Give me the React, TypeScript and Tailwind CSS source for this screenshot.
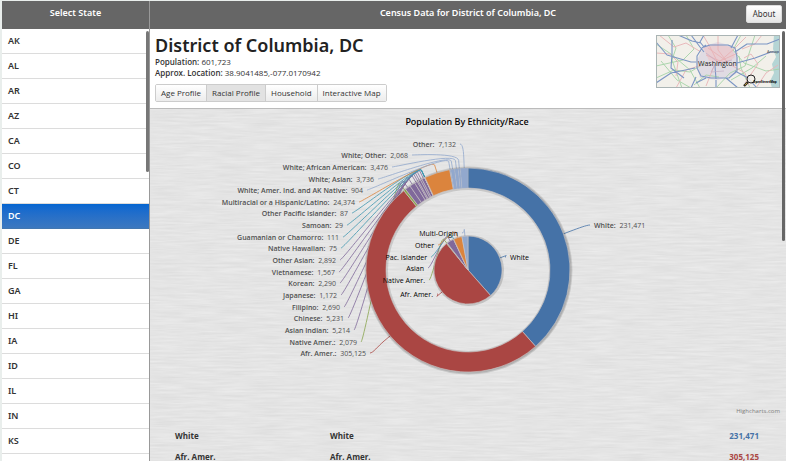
import React from "react";

const STATES = ["AK", "AL", "AR", "AZ", "CA", "CO", "CT", "DC", "DE", "FL", "GA", "HI", "IA", "ID", "IL", "IN", "KS"];
const TABS = ["Age Profile", "Racial Profile", "Household", "Interactive Map"];

const BLUE = "#4572a7";
const RED = "#aa4643";
const GREEN = "#89a54e";
const PURPLE = "#80699b";
const TEAL = "#3d96ae";
const ORANGE = "#db843d";
const SKY = "#92a8cd";

const CX = 468;
const CY = 270;
const OUTER = 102;
const HOLE = 82;
const PIE = 34;

type Slice = { name: string; value: number; color: string; x: number; y: number; anchor?: "start" | "end" };

const RING: Slice[] = [
  { name: "White", value: 231471, color: BLUE, x: 594, y: 225, anchor: "start" },
  { name: "Afr. Amer.", value: 305125, color: RED, x: 366, y: 353 },
  { name: "Native Amer.", value: 2079, color: GREEN, x: 357, y: 342 },
  { name: "Asian Indian", value: 5214, color: PURPLE, x: 350, y: 330 },
  { name: "Chinese", value: 5231, color: PURPLE, x: 344, y: 318 },
  { name: "Filipino", value: 2690, color: PURPLE, x: 340, y: 307 },
  { name: "Japanese", value: 1172, color: PURPLE, x: 337, y: 295 },
  { name: "Korean", value: 2290, color: PURPLE, x: 336, y: 283 },
  { name: "Vietnamese", value: 1567, color: PURPLE, x: 335, y: 272 },
  { name: "Other Asian", value: 2892, color: PURPLE, x: 336, y: 260 },
  { name: "Native Hawaiian", value: 75, color: TEAL, x: 337, y: 248 },
  { name: "Guamanian or Chamorro", value: 111, color: TEAL, x: 339, y: 237 },
  { name: "Samoan", value: 29, color: TEAL, x: 343, y: 225 },
  { name: "Other Pacific Islander", value: 87, color: TEAL, x: 348, y: 213 },
  { name: "Multiracial or a Hispanic/Latino", value: 24374, color: ORANGE, x: 355, y: 202 },
  { name: "White; Amer. Ind. and AK Native", value: 904, color: SKY, x: 363, y: 190 },
  { name: "White; Asian", value: 3736, color: SKY, x: 374, y: 179 },
  { name: "White; African American", value: 3476, color: SKY, x: 388, y: 167 },
  { name: "White; Other", value: 2068, color: SKY, x: 408, y: 155 },
  { name: "Other", value: 7132, color: SKY, x: 456, y: 144 },
];

const CENTER: Slice[] = [
  { name: "White", value: 231471, color: BLUE, x: 510, y: 257, anchor: "start" },
  { name: "Afr. Amer.", value: 305125, color: RED, x: 433, y: 294 },
  { name: "Native Amer.", value: 2079, color: GREEN, x: 425, y: 280 },
  { name: "Asian", value: 21056, color: PURPLE, x: 424, y: 268 },
  { name: "Pac. Islander", value: 302, color: TEAL, x: 427, y: 257 },
  { name: "Other", value: 24374, color: ORANGE, x: 434, y: 245 },
  { name: "Multi-Origin", value: 17316, color: SKY, x: 458, y: 233 },
];

function point(radius: number, angle: number): [number, number] {
  return [CX + radius * Math.sin(angle), CY - radius * Math.cos(angle)];
}

function withAngles(slices: Slice[]) {
  const total = slices.reduce((sum, s) => sum + s.value, 0);
  let at = 0;
  return slices.map((s) => {
    const start = at;
    at += (s.value / total) * Math.PI * 2;
    return { ...s, start, end: at, mid: (start + at) / 2 };
  });
}

function arc(inner: number, outer: number, start: number, end: number) {
  const large = end - start > Math.PI ? 1 : 0;
  const a = point(outer, start);
  const b = point(outer, end);
  const c = point(inner, end);
  const d = point(inner, start);
  return `M${a} A${outer} ${outer} 0 ${large} 1 ${b} L${c} A${inner} ${inner} 0 ${large} 0 ${d} Z`;
}

function connector(s: Slice, radius: number, reach: number, mid: number) {
  const edge = point(radius, mid);
  const bend = point(radius + reach, mid);
  const side = s.anchor === "start" ? -1 : 1;
  const from = [s.x + side * 4, s.y];
  const pull = [2 * bend[0] - edge[0], 2 * bend[1] - edge[1]];
  return `M${from} C${[from[0] + side * 3, from[1]]} ${pull} ${bend} L${edge}`;
}

function Chart() {
  const ring = withAngles(RING);
  const center = withAngles(CENTER);
  return (
    <svg viewBox="150 109 636 310" className="relative block h-[310px] w-full font-['Open_Sans',sans-serif]" role="img" aria-label="Population By Ethnicity/Race">
      <text x="467" y="125" textAnchor="middle" className="fill-black font-['Noto_Sans',sans-serif] text-[9px] font-medium">Population By Ethnicity/Race</text>
      {ring.map((s) => (
        <path key={s.name} d={connector(s, OUTER, 8, s.mid)} fill="none" stroke={s.color} strokeWidth="0.8" />
      ))}
      <g fill="none" stroke="#000" strokeOpacity="0.12">
        <circle cx={CX + 0.5} cy={CY + 0.5} r={OUTER} strokeWidth="4" />
        <circle cx={CX + 0.5} cy={CY + 0.5} r={OUTER} strokeWidth="2" />
        <circle cx={CX + 0.5} cy={CY + 0.5} r={HOLE} strokeWidth="3" />
      </g>
      {ring.map((s) => (
        <path key={s.name} d={arc(HOLE, OUTER, s.start, s.end)} fill={s.color} stroke="#c9c4c4" strokeWidth={s.color === SKY ? 0.2 : 0.6} />
      ))}
      {center.map((s) => (
        <path key={s.name} d={connector(s, PIE, 5, s.mid)} fill="none" stroke={s.color} strokeWidth="0.8" />
      ))}
      <circle cx={CX + 0.5} cy={CY + 0.5} r={PIE} fill="none" stroke="#000" strokeOpacity="0.15" strokeWidth="3" />
      {center.map((s) => (
        <path key={s.name} d={arc(0, PIE, s.start, s.end)} fill={s.color} stroke="#c9c4c4" strokeWidth="0.6" />
      ))}
      {ring.map((s) => (
        <text key={s.name} x={s.x} y={s.y + 3} textAnchor={s.anchor ?? "end"} xmlSpace="preserve" className="fill-[#505050] text-[7px]">
          <tspan className="font-semibold">{s.name}:</tspan>
          {"  " + s.value.toLocaleString("en-US")}
        </text>
      ))}
      {center.map((s) => (
        <text key={s.name} x={s.x} y={s.y + 3} textAnchor={s.anchor ?? "end"} className="fill-black text-[7px]">{s.name}</text>
      ))}
      <text x="780" y="413" textAnchor="end" className="fill-[#808080] text-[6px]">Highcharts.com</text>
    </svg>
  );
}

function BrushedMetal() {
  return (
    <svg className="absolute inset-0 h-full w-full" aria-hidden="true">
      <filter id="brushed" x="0" y="0" width="100%" height="100%" colorInterpolationFilters="sRGB">
        <feTurbulence type="fractalNoise" baseFrequency="0.03 0.5" numOctaves="3" seed="4" />
        <feColorMatrix values="0.07 0 0 0 0.86  0.07 0 0 0 0.86  0.07 0 0 0 0.86  0 0 0 0 1" />
      </filter>
      <rect width="100%" height="100%" filter="url(#brushed)" />
    </svg>
  );
}

function LocationMap() {
  return (
    <svg viewBox="0 0 124 53" className="h-[53px] w-[124px] shrink-0 font-['Open_Sans',sans-serif]" role="img" aria-label="Map of Washington">
      <rect width="124" height="53" fill="#f2f0ea" />
      <path d="M118 0h6v53h-8l-2-7 4-8-2-9 4-7-3-8z" fill="#b5d5d5" />
      <path d="M40 27l8-16 14-4 14 4 6 12-2 16-18 6-18-2z" fill="#e0dbe3" />
      <path d="M47 12l12-3 17 3 3 10-8 6-18-2z" fill="#e8ccd1" />
      <g fill="none" stroke="#a4d3a6" strokeWidth="0.9">
        <path d="M0 9l15 10 19 16 10 18M12 0l8 13-4 12 10 28M0 43l18-8 16 2 15-9M30 0l8 14-11 11-27 6M85 0l-8 15 11 13 22 8 14-2M60 53l14-15 15-7 10-31M75 45l21-12 14-12M38 50l12-10 13 2M5 26l16 19 14 8M94 53l-9-20-2-12" />
      </g>
      <g fill="none" stroke="#e8b2b6" strokeWidth="0.9">
        <path d="M3 0l15 12 12-4 15 9M20 53l10-18 16-5M47 0l7 12 8 16 16-14 12-12M62 0v15l10 13M50 20l14 6 18-8M52 13l20 14M89 48l13-19-7-10-7 4M100 53l10-15 12-8M0 18l14 1 8 8-2 14M86 14l13-5 7-9M58 31l-8 20M75 30l14 8 4 12" />
      </g>
      <g fill="none" stroke="#7b95c4" strokeWidth="1.1" strokeLinejoin="round">
        <path d="M0 7l11 13 24 7 5 0M16 5v14l-1 14 13 10M0 48l15-10 24-5M35 0l9 12 4 5M48 0l-4 7 4 5 6-2h18l7 3 2 9v14l-8 7-18 0-10-2-4-8 0-12 5-8 4-3M75 13l7-13M79 17l12-8 20 0 13-5M81 28l18-5 16-6 9 0M60 45v8M60 44l-1-13M79 36l13 7 9 10M40 42l-5 11M50 43l-10 5M70 43l12 10M22 0l14 6 9 2" />
      </g>
      <path d="M50 18l13 10 13-3M60 28l-5 9 13-1" fill="none" stroke="#c3adc4" strokeWidth="0.7" />
      <text x="42" y="31" className="fill-[#222] text-[7px]">Washington</text>
      <text x="123" y="18" textAnchor="end" className="fill-[#444] text-[4px]">Annap</text>
      <path d="M92 47l-4 4" stroke="#332d20" strokeWidth="2.4" />
      <path d="M91 48l-2 2" stroke="#bb9638" strokeWidth="0.9" />
      <circle cx="95" cy="44" r="4" fill="#f2f0ea" fillOpacity="0.8" stroke="#222" strokeWidth="1" />
      <text x="97" y="48" className="fill-black text-[3px] font-bold">OpenStreetMap</text>
      <rect x="0.5" y="0.5" width="123" height="52" fill="none" stroke="#aab4b4" />
    </svg>
  );
}

export default function App() {
  return (
    <div className="flex h-screen overflow-hidden border-l-2 border-t border-[#e9eeec] bg-white font-['Noto_Sans',sans-serif] text-[9px] text-[#333]">
      <aside className="relative flex w-[148px] shrink-0 flex-col border-r border-[#999]">
        <h2 className="flex h-7 shrink-0 items-center justify-center bg-[#666] pb-1 font-semibold text-white">Select State</h2>
        <nav aria-label="States">
          {STATES.map((code) => (
            <button
              key={code}
              className={
                code === "DC"
                  ? "block h-[25px] w-full border-b border-[#4377b0] bg-linear-to-b from-[#0366d1] to-[#3c78bf] px-1.5 text-left font-semibold text-white"
                  : "block h-[25px] w-full border-b border-[#dcdcdc] bg-white px-1.5 text-left font-semibold text-[#333]"
              }
            >
              {code}
            </button>
          ))}
        </nav>
        <div className="absolute right-0 top-[30px] h-[141px] w-[3px] rounded-full bg-[#777]" />
      </aside>
      <main className="relative flex min-w-0 flex-1 flex-col">
        <header className="flex h-7 shrink-0 items-center bg-[#666] px-1">
          <div className="w-9" />
          <h2 className="flex-1 pb-1 text-center font-semibold text-white">Census Data for District of Columbia, DC</h2>
          <button className="mb-0.5 h-[18px] w-9 rounded-xs border border-[#ddd] bg-linear-to-b from-white to-[#e6e6e6] text-[8px] leading-3">About</button>
        </header>
        <section className="flex h-20 shrink-0 items-start justify-between border-b border-[#bbb] pl-[5px] pr-[6px] pt-1.5">
          <div>
            <h1 className="mb-px text-[18px] font-semibold leading-5 text-[#222]">District of Columbia, DC</h1>
            <p className="font-['Open_Sans',sans-serif] text-[8px] leading-[11px]"><b className="font-semibold">Population:</b> 601,723</p>
            <p className="font-['Open_Sans',sans-serif] text-[8px] leading-[11px]"><b className="font-semibold">Approx. Location:</b> 38.9041485,-077.0170942</p>
            <div className="mt-1.5 flex w-max divide-x divide-[#ccc] overflow-hidden rounded-xs border border-[#ccc] font-['Open_Sans',sans-serif]">
              {TABS.map((tab) => (
                <button
                  key={tab}
                  className={
                    tab === "Racial Profile"
                      ? "h-4 bg-[#e2e2e2] px-[5px] text-[8px]"
                      : "h-4 bg-linear-to-b from-white to-[#ececec] px-[5px] text-[8px]"
                  }
                >
                  {tab}
                </button>
              ))}
            </div>
          </div>
          <LocationMap />
        </section>
        <section className="relative flex-1 overflow-hidden bg-[#e4e4e4]">
          <BrushedMetal />
          <Chart />
          <table className="relative mt-1.5 w-full font-['Open_Sans',sans-serif] text-[8px] font-bold">
            <tbody>
              <tr className="h-[21px]">
                <td className="w-[180px] pl-[25px]">White</td>
                <td>White</td>
                <td className="pr-[27px] text-right text-[#4572a7]">231,471</td>
              </tr>
              <tr className="h-[21px]">
                <td className="w-[180px] pl-[25px]">Afr. Amer.</td>
                <td>Afr. Amer.</td>
                <td className="pr-[27px] text-right text-[#aa4643]">305,125</td>
              </tr>
            </tbody>
          </table>
        </section>
        <div className="absolute right-px top-[30px] h-[210px] w-[3px] rounded-full bg-[#666]" />
      </main>
    </div>
  );
}
